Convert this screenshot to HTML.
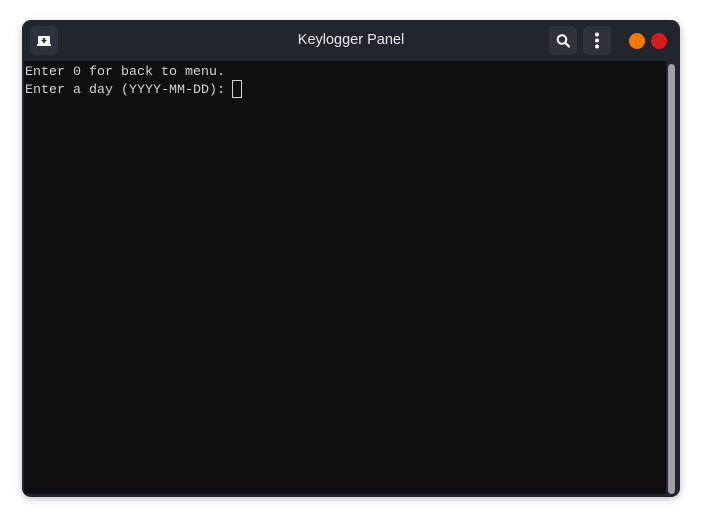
<!DOCTYPE html><html><head><style>
body{margin:0;width:702px;height:522px;background:#fff;position:relative;overflow:hidden;font-family:"Liberation Sans",sans-serif}
.win{position:absolute;left:22px;top:20px;width:658px;height:477px;background:#22252e;border-radius:9px;box-shadow:0 2px 8px rgba(0,0,0,.25);overflow:hidden}
.term{position:absolute;left:2px;top:41px;width:642px;height:433px;background:#0f0f11}
.btn{position:absolute;top:6px;width:28px;height:29px;background:#2f323c;border-radius:5px}
.l{position:absolute;left:1px;font-family:"Liberation Mono",monospace;font-size:13.33px;line-height:18px;color:#d0d0d0;white-space:pre}
.cur{position:absolute;left:208px;top:19px;width:8px;height:16px;border:1px solid #d0d0d0}
.sb{position:absolute;left:646px;top:44px;width:7px;height:430px;background:#a0a0a4;border-radius:4px}
.dot{position:absolute;top:13px;width:16px;height:16px;border-radius:50%}
</style></head><body>
<div class="win">
<div class="btn" style="left:8px"><svg width="28" height="29"><rect x="8" y="10" width="12" height="9" fill="#fff"/><rect x="7" y="18" width="14" height="2" fill="#fff"/><path d="M14 12v5M11.5 14.5h5" stroke="#22252e" stroke-width="1.6"/></svg></div>
<div style="position:absolute;left:0;width:658px;top:12px;text-align:center;color:#e8e8e8;font-size:14.5px">Keylogger Panel</div>
<div class="btn" style="left:527px"><svg width="28" height="29"><circle cx="13" cy="13.5" r="4.3" fill="none" stroke="#fff" stroke-width="2"/><path d="M16 16.5l4 4" stroke="#fff" stroke-width="2.2" stroke-linecap="round"/></svg></div>
<div class="btn" style="left:561px"><svg width="28" height="29"><circle cx="14" cy="8.5" r="2" fill="#fff"/><circle cx="14" cy="14.5" r="2" fill="#fff"/><circle cx="14" cy="20.5" r="2" fill="#fff"/></svg></div>
<div class="dot" style="left:607px;background:#f57900"></div>
<div class="dot" style="left:629px;background:#d41c1c"></div>
<div class="term">
<div class="l" style="top:3px">Enter 0 for back to menu.</div>
<div class="l" style="top:21px">Enter a day (YYYY-MM-DD):</div>
<div class="cur"></div>
</div>
<div class="sb"></div>
</div>
</body></html>
